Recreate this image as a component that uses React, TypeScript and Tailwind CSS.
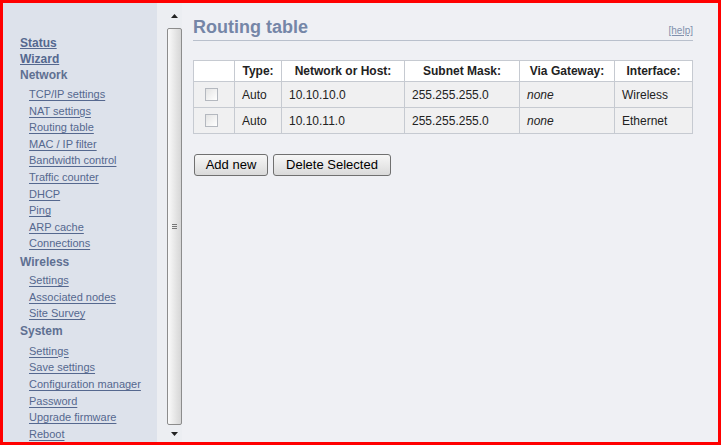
const nav: { label: string; sub?: string[]; link?: boolean; mt: string; smt?: string }[] = [
  { label: "Status", link: true, mt: "mt-0" },
  { label: "Wizard", link: true, mt: "mt-0" },
  { label: "Network", mt: "mt-0", smt: "mt-[3px]", sub: ["TCP/IP settings", "NAT settings", "Routing table", "MAC / IP filter", "Bandwidth control", "Traffic counter", "DHCP", "Ping", "ARP cache", "Connections"] },
  { label: "Wireless", mt: "mt-[2px]", smt: "mt-[2px]", sub: ["Settings", "Associated nodes", "Site Survey"] },
  { label: "System", mt: "mt-[1px]", smt: "mt-[4px]", sub: ["Settings", "Save settings", "Configuration manager", "Password", "Upgrade firmware", "Reboot"] },
];

const routes = [
  { type: "Auto", net: "10.10.10.0", mask: "255.255.255.0", gw: "none", iface: "Wireless" },
  { type: "Auto", net: "10.10.11.0", mask: "255.255.255.0", gw: "none", iface: "Ethernet" },
];

const App = () => {
  return (
    <div className="w-[721px] h-[445px] overflow-hidden border-[3px] border-[#ff0000] bg-[#eef0f4] flex font-['Liberation_Sans',Arial,sans-serif]">
      {/* Left menu frame */}
      <div className="w-[154px] shrink-0 h-full bg-[#dde2eb] pt-[32px] pl-[17px]">
        {nav.map((g) => (
          <div key={g.label} className={g.mt}>
            <div className="h-[16px] leading-[16px] text-[12px] font-bold">
              {g.link ? (
                <a href="#" className="text-[#55688f] underline">{g.label}</a>
              ) : (
                <span className="text-[#5f7092]">{g.label}</span>
              )}
            </div>
            {g.sub && (
              <ul className={`${g.smt} pl-[9px]`}>
                {g.sub.map((s) => (
                  <li key={s} className="h-[16.6px] leading-[16.6px] text-[11px]">
                    <a href="#" className="text-[#55688f] underline underline-offset-[2px]">{s}</a>
                  </li>
                ))}
              </ul>
            )}
          </div>
        ))}
      </div>

      {/* Scrollbar strip */}
      <div className="w-[25px] shrink-0 h-full bg-[#eceef2] pl-[10px] flex flex-col">
        <div className="h-[25px] flex items-center justify-center">
          <svg width="7" height="4" viewBox="0 0 7 4"><path d="M3.5 0L7 4H0z" fill="#222" /></svg>
        </div>
        <div className="flex-1 border border-[#8c8c8c] rounded-[2px] bg-gradient-to-r from-[#fafafa] to-[#d6d6d6] flex items-center justify-center">
          <div className="flex flex-col gap-[1px]">
            <div className="w-[5px] h-[1px] bg-[#777]" />
            <div className="w-[5px] h-[1px] bg-[#777]" />
            <div className="w-[5px] h-[1px] bg-[#777]" />
          </div>
        </div>
        <div className="h-[17px] flex items-center justify-center">
          <svg width="7" height="4" viewBox="0 0 7 4"><path d="M0 0H7L3.5 4z" fill="#222" /></svg>
        </div>
      </div>

      {/* Main frame */}
      <div className="flex-1 h-full bg-[#eff0f4] pl-[11px] pt-[13px]">
        <div className="w-[500px]">
          <div className="flex items-end justify-between border-b border-[#b9c0cc] h-[25px] pb-[2px]">
            <h1 className="text-[18px] leading-[22px] font-bold text-[#7586a7]">Routing table</h1>
            <a href="#" className="text-[10px] leading-[12px] text-[#8190ad] underline mb-[1px]">[help]</a>
          </div>

          <table className="mt-[19px] w-[500px] border-collapse text-[12px] text-[#222]">
            <thead>
              <tr className="bg-white h-[21px]">
                <th className="border border-[#c6cad1] w-[41px]"></th>
                <th className="border border-[#c6cad1] w-[47px] font-bold">Type:</th>
                <th className="border border-[#c6cad1] w-[123px] font-bold">Network or Host:</th>
                <th className="border border-[#c6cad1] w-[115px] font-bold">Subnet Mask:</th>
                <th className="border border-[#c6cad1] w-[95px] font-bold">Via Gateway:</th>
                <th className="border border-[#c6cad1] font-bold">Interface:</th>
              </tr>
            </thead>
            <tbody>
              {routes.map((r) => (
                <tr key={r.net} className="bg-[#f0f0f1] h-[26px]">
                  <td className="border border-[#c6cad1] pl-[11px]">
                    <div className="w-[13px] h-[13px] border border-[#b4b8bf] bg-gradient-to-br from-[#e4e4e4] to-white" />
                  </td>
                  <td className="border border-[#c6cad1] px-[7px]">{r.type}</td>
                  <td className="border border-[#c6cad1] px-[7px]">{r.net}</td>
                  <td className="border border-[#c6cad1] px-[7px]">{r.mask}</td>
                  <td className="border border-[#c6cad1] px-[7px] italic">{r.gw}</td>
                  <td className="border border-[#c6cad1] px-[7px]">{r.iface}</td>
                </tr>
              ))}
            </tbody>
          </table>

          <div className="mt-[20px] flex gap-[5px] pl-[1px]">
            <button className="w-[74px] h-[22px] border border-[#707070] rounded-[3px] bg-gradient-to-b from-[#f7f7f7] to-[#dadada] text-[13px] text-black">
              Add new
            </button>
            <button className="w-[118px] h-[22px] border border-[#707070] rounded-[3px] bg-gradient-to-b from-[#f7f7f7] to-[#dadada] text-[13px] text-black">
              Delete Selected
            </button>
          </div>
        </div>
      </div>
    </div>
  );
};

export default App;
